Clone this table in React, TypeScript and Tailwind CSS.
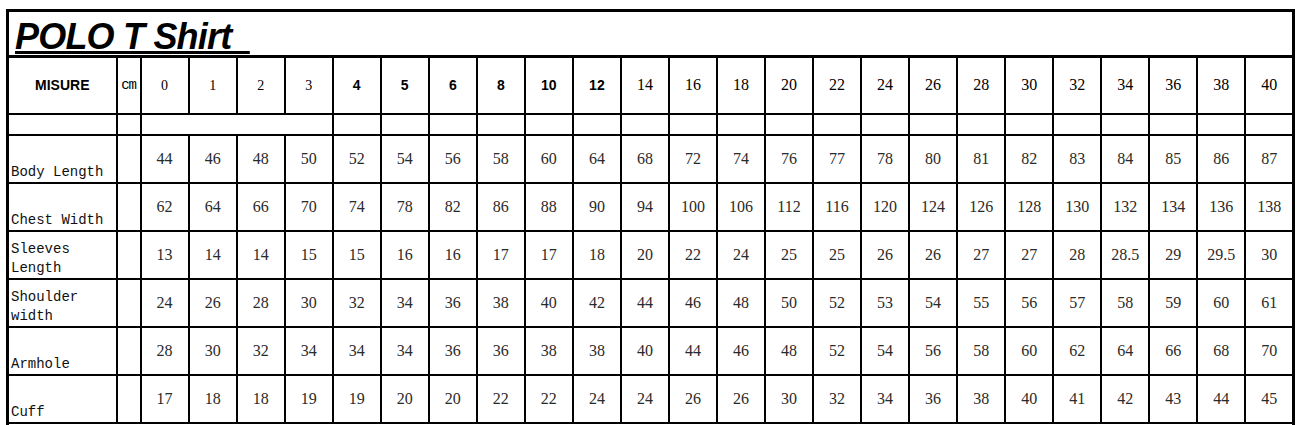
import React from "react";

const sizes = ["0","1","2","3","4","5","6","8","10","12","14","16","18","20","22","24","26","28","30","32","34","36","38","40"];

const rows: { label: string[]; values: string[] }[] = [
  { label: ["Body Length"], values: "44 46 48 50 52 54 56 58 60 64 68 72 74 76 77 78 80 81 82 83 84 85 86 87".split(" ") },
  { label: ["Chest Width"], values: "62 64 66 70 74 78 82 86 88 90 94 100 106 112 116 120 124 126 128 130 132 134 136 138".split(" ") },
  { label: ["Sleeves", "Length"], values: "13 14 14 15 15 16 16 17 17 18 20 22 24 25 25 26 26 27 27 28 28.5 29 29.5 30".split(" ") },
  { label: ["Shoulder", "width"], values: "24 26 28 30 32 34 36 38 40 42 44 46 48 50 52 53 54 55 56 57 58 59 60 61".split(" ") },
  { label: ["Armhole"], values: "28 30 32 34 34 34 36 36 38 38 40 44 46 48 52 54 56 58 60 62 64 66 68 70".split(" ") },
  { label: ["Cuff"], values: "17 18 18 19 19 20 20 22 22 24 24 26 26 30 32 34 36 38 40 41 42 43 44 45".split(" ") },
];

function headerClass(i: number) {
  if (i < 4) return "font-['Liberation_Serif',serif] text-[14px] font-normal";
  if (i < 10) return "font-['Liberation_Sans',Arial,sans-serif] text-[14px] font-bold";
  return "font-['Liberation_Serif',serif] text-[16px] font-normal";
}

export default function App() {
  return (
    <div className="w-[1300px] h-[425px] overflow-hidden bg-white pl-[6px] pt-[9px]">
      <table className="border-collapse table-fixed w-[1289px] border-[3px] border-black text-black">
        <colgroup>
          <col className="w-[109px]" />
          <col className="w-[24px]" />
          {sizes.map((s) => (
            <col key={s} className="w-[48px]" />
          ))}
        </colgroup>
        <tbody>
          <tr className="h-[46px]">
            <td colSpan={26} className="border-[3px] border-black p-0 align-bottom">
              <div className="pl-[6px] leading-[36px] font-['Liberation_Sans',Arial,sans-serif] font-bold italic text-[36px] tracking-[-0.8px]">
                <span className="underline decoration-[3px] underline-offset-[2px]">POLO T Shirt&nbsp;&nbsp;</span>
              </div>
            </td>
          </tr>
          <tr className="h-[57px]">
            <td className="border-2 border-black text-center align-middle font-['Liberation_Sans',Arial,sans-serif] font-bold text-[14px]">
              MISURE
            </td>
            <td className="border-2 border-black text-center align-middle font-['Liberation_Mono',monospace] text-[14px] tracking-[-1px]">
              cm
            </td>
            {sizes.map((s, i) => (
              <td key={s} className={`border-2 border-black text-center align-middle ${headerClass(i)}`}>
                {s}
              </td>
            ))}
          </tr>
          <tr className="h-[21px]">
            <td className="border-2 border-black"></td>
            <td className="border-2 border-black"></td>
            <td colSpan={4} className="border-2 border-black"></td>
            {sizes.slice(4).map((s) => (
              <td key={s} className="border-2 border-black"></td>
            ))}
          </tr>
          {rows.map((r) => (
            <tr key={r.label.join(" ")} className="h-[48px]">
              <td className="border-2 border-black align-bottom pl-[2px] pb-0 font-['Liberation_Mono',monospace] text-[14px] leading-[19px] text-[#111]">
                {r.label.map((l) => (
                  <div key={l}>{l}</div>
                ))}
              </td>
              <td className="border-2 border-black"></td>
              {r.values.map((v, i) => (
                <td
                  key={i}
                  className="border-2 border-black text-center align-middle font-['Liberation_Serif',serif] text-[16px] text-[#2a2a2a]"
                >
                  {v}
                </td>
              ))}
            </tr>
          ))}
          <tr className="h-[40px]">
            <td colSpan={26} className="border-2 border-black"></td>
          </tr>
        </tbody>
      </table>
    </div>
  );
}
